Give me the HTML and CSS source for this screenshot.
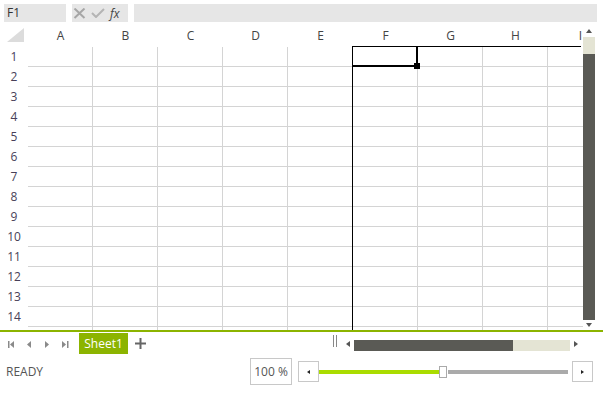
FILE: index.html
```html
<!DOCTYPE html>
<html>
  <head>
    <meta charset="UTF-8" />
    <title>Spreadsheet</title>
    <link rel="stylesheet" href="styles.css">
  </head>
  <body>
    <div class="formula-bar">
      <div class="name-box">F1</div>
      <div class="fx-buttons">
        <svg class="icon-cancel" width="13" height="11" viewBox="0 0 13 11">
          <path d="M1.5 0.5 L11.5 10 M11.5 0.5 L1.5 10" stroke="#a6a6a6" stroke-width="2" fill="none" />
        </svg>
        <svg class="icon-ok" width="14" height="10" viewBox="0 0 14 10">
          <path d="M1 5 L5 9 L13 1" stroke="#b4b4b4" stroke-width="2" fill="none" />
        </svg>
        <span class="fx">fx</span>
      </div>
      <div class="formula-input"></div>
    </div>

    <div class="sheet">
      <div class="grid">
        <div class="col-headers">
          <div class="corner">
            <svg width="28" height="21" viewBox="0 0 28 21">
              <polygon points="7,16 24,16 24,2" fill="#dcdcdc" />
            </svg>
          </div>
          <div class="ch">A</div>
          <div class="ch">B</div>
          <div class="ch">C</div>
          <div class="ch">D</div>
          <div class="ch">E</div>
          <div class="ch">F</div>
          <div class="ch">G</div>
          <div class="ch">H</div>
          <div class="ch">I</div>
        </div>
        <div id="rows"></div>

        <!-- frozen pane lines + selected cell -->
        <div class="freeze-v"></div>
        <div class="freeze-h"></div>
        <div class="selection"></div>
        <div class="fill-handle"></div>
      </div>

      <div class="vscroll">
        <div class="arrow-up"></div>
        <div class="vtrack">
          <div class="vtrack-light"></div>
          <div class="vtrack-thumb"></div>
        </div>
        <div class="arrow-down"></div>
      </div>
    </div>

    <div class="tab-bar">
      <svg class="tab-nav" width="79" height="24" viewBox="0 0 79 24">
        <g fill="#8a8a8a">
          <rect x="8" y="11" width="1.5" height="7" />
          <polygon points="14,11 14,18 10,14.5" />
          <polygon points="31,11 31,18 27,14.5" />
          <polygon points="45,11 45,18 49,14.5" />
          <polygon points="62,11 62,18 66,14.5" />
          <rect x="67" y="11" width="1.5" height="7" />
        </g>
      </svg>
      <div class="tab">Sheet1</div>
      <svg class="add-sheet" width="11" height="11" viewBox="0 0 11 11">
        <path d="M5.5 0 V11 M0 5.5 H11" stroke="#666" stroke-width="2" />
      </svg>

      <div class="hscroll">
        <div class="splitter"></div>
        <div class="arrow-left"></div>
        <div class="htrack">
          <div class="htrack-thumb"></div>
        </div>
        <div class="arrow-right"></div>
      </div>
    </div>

    <div class="status-bar">
      <span class="status">READY</span>
      <div class="zoom-value">100 %</div>
      <div class="zoom-btn"><span class="tri-left"></span></div>
      <div class="slider">
        <div class="slider-fill"></div>
        <div class="slider-thumb"></div>
        <div class="slider-rest"></div>
      </div>
      <div class="zoom-btn"><span class="tri-right"></span></div>
    </div>

    <script>
      // 14 full rows + one cut off at the bottom
      const rows = document.getElementById("rows");
      for (let r = 1; r <= 15; r++) {
        const row = document.createElement("div");
        row.className = "row";
        const rh = document.createElement("div");
        rh.className = "rh";
        rh.textContent = r <= 14 ? r : "";
        row.appendChild(rh);
        for (let c = 0; c < 9; c++) {
          const cell = document.createElement("div");
          cell.className = "cell";
          row.appendChild(cell);
        }
        rows.appendChild(row);
      }
    </script>
  </body>
</html>
```

FILE: styles.css
```css
body {
  margin: 0;
  width: 603px;
  height: 394px;
  overflow: hidden;
  background-color: #fff;
  font-family: "Segoe UI", "Open Sans", sans-serif;
  font-size: 12px;
  color: #444;
}

/* formula bar */
.formula-bar {
  display: flex;
  height: 26px;
  padding: 4px 6px 4px 4px;
  box-sizing: border-box;
}

.name-box {
  width: 62px;
  background-color: #e6e6e6;
  padding-left: 3px;
  box-sizing: border-box;
  line-height: 18px;
  color: #333;
}

.fx-buttons {
  display: flex;
  align-items: center;
  width: 56px;
  margin-left: 6px;
  background-color: #e6e6e6;
}

.icon-cancel {
  margin-left: 1px;
}

.icon-ok {
  margin-left: 5px;
}

.fx {
  margin-left: 5px;
  font-style: italic;
  color: #444;
}

.formula-input {
  flex: 1;
  margin-left: 6px;
  background-color: #e6e6e6;
}

/* grid */
.sheet {
  display: flex;
  height: 304px;
}

.grid {
  position: relative;
  width: 583px;
  overflow: hidden;
}

.col-headers,
.row {
  display: flex;
}

.col-headers {
  height: 21px;
}

.corner {
  width: 28px;
  flex-shrink: 0;
}

.corner svg {
  display: block;
}

.ch {
  width: 65px;
  flex-shrink: 0;
  text-align: center;
  line-height: 20px;
  color: #444;
}

.row {
  height: 20px;
}

.rh {
  width: 28px;
  flex-shrink: 0;
  text-align: center;
  line-height: 19px;
  color: #483f58;
}

.cell {
  width: 65px;
  flex-shrink: 0;
  border-right: 1px solid #d4d4d4;
  border-bottom: 1px solid #d4d4d4;
  box-sizing: border-box;
}

.freeze-v {
  position: absolute;
  left: 352px;
  top: 20px;
  bottom: 0;
  width: 1px;
  background-color: #000;
}

.freeze-h {
  position: absolute;
  left: 352px;
  top: 20px;
  width: 229px;
  height: 1px;
  background-color: #000;
}

.selection {
  position: absolute;
  left: 352px;
  top: 20px;
  width: 66px;
  height: 21px;
  border-right: 2px solid #000;
  border-bottom: 2px solid #000;
  box-sizing: border-box;
}

.fill-handle {
  position: absolute;
  left: 414px;
  top: 37px;
  width: 6px;
  height: 6px;
  background-color: #000;
}

/* vertical scrollbar */
.vscroll {
  width: 20px;
  display: flex;
  flex-direction: column;
}

.arrow-up,
.arrow-down {
  width: 0;
  height: 0;
  margin-left: 3px;
  border-left: 3.5px solid transparent;
  border-right: 3.5px solid transparent;
}

.arrow-up {
  margin-top: 3px;
  border-bottom: 4px solid #555;
}

.arrow-down {
  margin-top: 3px;
  border-top: 4px solid #555;
}

.vtrack {
  width: 12px;
  margin-top: 4px;
  display: flex;
  flex-direction: column;
}

.vtrack-light {
  height: 17px;
  background-color: #e4e4d4;
}

.vtrack-thumb {
  height: 266px;
  background-color: #5a5a55;
}

/* sheet tabs + horizontal scrollbar */
.tab-bar {
  display: flex;
  align-items: flex-start;
  height: 24px;
  border-top: 2px solid #8cb400;
}

.tab-nav {
  display: block;
  margin-top: -2px;
}

.tab {
  width: 49px;
  height: 21px;
  margin-top: 1px;
  background-color: #8cb400;
  color: #fff;
  text-align: center;
  line-height: 21px;
}

.add-sheet {
  margin-left: 7px;
  margin-top: 6px;
}

.hscroll {
  display: flex;
  align-items: flex-start;
  margin-left: auto;
  width: 270px;
}

.splitter {
  width: 2px;
  height: 12px;
  margin-top: 3px;
  border-left: 1px solid #888;
  border-right: 1px solid #888;
}

.arrow-left,
.arrow-right {
  width: 0;
  height: 0;
  margin-top: 9px;
  border-top: 3.5px solid transparent;
  border-bottom: 3.5px solid transparent;
}

.arrow-left {
  margin-left: 9px;
  border-right: 4px solid #555;
}

.arrow-right {
  margin-left: 4px;
  border-left: 4px solid #555;
}

.htrack {
  width: 216px;
  height: 11px;
  margin-top: 8px;
  margin-left: 4px;
  background-color: #e4e4d4;
}

.htrack-thumb {
  width: 159px;
  height: 100%;
  background-color: #5a5a55;
}

/* status bar */
.status-bar {
  display: flex;
  align-items: center;
  height: 31px;
  padding: 0 10px 0 6px;
}

.status {
  flex: 1;
  color: #555;
}

.zoom-value {
  width: 42px;
  height: 27px;
  border: 1px solid #c8c8c8;
  box-sizing: border-box;
  text-align: center;
  line-height: 25px;
  color: #555;
}

.zoom-btn {
  display: flex;
  align-items: center;
  justify-content: center;
  width: 21px;
  height: 21px;
  border: 1px solid #c8c8c8;
  box-sizing: border-box;
}

.zoom-value + .zoom-btn {
  margin-left: 6px;
}

.tri-left {
  border-top: 2.5px solid transparent;
  border-bottom: 2.5px solid transparent;
  border-right: 3px solid #222;
}

.tri-right {
  border-top: 2.5px solid transparent;
  border-bottom: 2.5px solid transparent;
  border-left: 3px solid #222;
}

.slider {
  display: flex;
  align-items: center;
  width: 253px;
}

.slider-fill {
  width: 120px;
  height: 4px;
  background-color: #aadc00;
}

.slider-thumb {
  width: 8px;
  height: 12px;
  border: 1px solid #aaa;
  box-sizing: border-box;
  background-color: #fff;
}

.slider-rest {
  width: 120px;
  height: 4px;
  margin-left: 1px;
  background-color: #aaa;
}
```
